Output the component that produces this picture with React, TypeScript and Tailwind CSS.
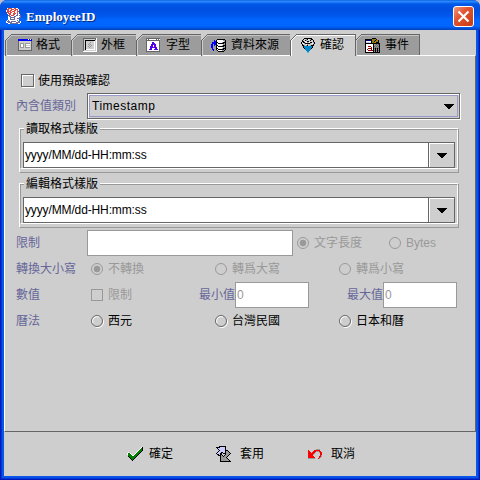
import React from "react";

const font = "font-['Liberation_Sans','Noto_Sans_CJK_TC',sans-serif]";

const palette: Record<string, string> = {
  k: "#000000", w: "#ffffff", b: "#0000ff", g: "#999999", d: "#666666", l: "#ccccff",
  r: "#ff0000", t: "#0087c8", G: "#008000", c: "#cecece", p: "#5500e8",
  m: "#990000", o: "#b87800", n: "#000080", a: "#70b8d8", e: "#e3493d", s: "#6a6a9a", y: "#35803f",
};

/** Small bitmap icon: one character per pixel, "." is transparent. */
function Bitmap({ rows }: { rows: string[] }) {
  const w = Math.max(...rows.map((r) => r.length));
  return (
    <svg width={w} height={rows.length} viewBox={`0 0 ${w} ${rows.length}`} shapeRendering="crispEdges" className="shrink-0">
      {rows.flatMap((row, y) =>
        [...row].map((c, x) => (c === "." ? null : <rect key={`${x}-${y}`} x={x} y={y} width="1" height="1" fill={palette[c]} />)),
      )}
    </svg>
  );
}

const formatIcon = [
  "bbbbbbbbbbwbwb", "bbbbbbbbbbbbbb", "dccccccccccccd", "dccccccccccccd", "dcggggcgggggcd", "dcgwwgcgwwwwcd",
  "dcgwwgcgcccccd", "dcgwwgcgwwwwcd", "dcggggcgggggcd", "dccccccccccccd", "dccccccccccccd", "dddddddddddddd",
];
const frameIcon = [
  "dddddddddddddw", "dcccccccccccdw", "dckkkkkkkkkkcw", "dckccccccccwcw", "dckccccgcccwcw", "dckcccgccccwcw", "dckccgcgcccwcw",
  "dckcccgcgccwcw", "dckccgcgcccwcw", "dckcccgccccwcw", "dckccccccccwcw", "dckwwwwwwwwwcw", "dccccccccccccw", "wwwwwwwwwwwwww",
];
const fontIcon = [
  "dddddddddddddd", "dwdwwwwwwwdwdw", "dddddddddddddd", "dwwwwwwwwwwwwd", "dwwwwwppwwwwwd", "dwwwwwpppwwwwd", "dwwwwpppppwwwd",
  "dwwwwppwppwwwd", "dwwwpppwppwwwd", "dwwwpppppppwwd", "dwwwppwwwppwwd", "dwwpppwwppppwd", "dwwwwwwwwwwwwd", "dddddddddddddd",
];
const dataIcon = [
  "......kkkkkkkk..", "...b.kwwwwwwggk.", "...bbkwwwwwwwgk.", ".bbbbkkwwwwgkkk.", ".bbbbkwkkkkkkgk.", "bb.bbkwwwwwwggk.", "bb.b.kkwwwwgkkk.",
  "bb...kwkkkkkkgk.", "bb...kwwwwwwggk.", ".b...kkwwwwgkkk.", ".bb..kwkkkkkkgk.", "..b...kwwwwggk..", ".......kkkkkk...",
];
const verifyIcon = [
  "...kkkkkkkk....", "..kccgkwcgkk...", ".kcckgccckcck..", ".kkcwckkcccck..", "kckkcwgcwkkcgk.", "kcwgkkkkkgcwck.", ".kcccwgccccck..", ".kkgcgkccgkkk..",
  "..kttttttttk...", "..kttttttttk...", "...kttttttk....", "....tttttt.....", ".....tttt......", "......tt.......", "......aa.......",
];
const eventIcon = [
  ".......kkkk.....", "kkkkkkkoyook....", "knnnnnkooykook..", "kwwwwwkyokoyok..", "klllllkoyookkk..", "kkkkkkkkkkkkkkk.", "kwwwwwwwkggdgdk.",
  "kwwwwwwwkgdgdgk.", "kwwmmmwwkdgdgdk.", "kwwwwwmwkgdgdgk.", "kwwmmmmwkdkdkdk.", "kwmwwwmwkgkgkgk.", "kwwmmmmmkdkdkdk.", "kwwwwwwwkgkgkgk.", "kkkkkkkkkkkkkkk.",
];
const checkIcon = [
  "..............wk", ".............wGk", "............wGGk", "...........wGGGk", "..........wGGGk.", ".w.......wGGGk..", "wGGw....wGGGk...",
  "wGGGw..wGGGk....", ".GGGGwwGGGk.....", ".kGGGGGGGk......", "..kGGGGGk.......", "...kGGGk........", "....kGk.........", ".....k..........",
];
const cancelIcon = [
  "........gggg..", "r.....rrrrrr..", "rr...rrrgggrr.", "rrr.rrrg...grr", "rrrrrrg.....rr", "rrrrrg......rr", "rrrrr.......rg",
  "rrrrrr.....rrg", "rrrrrrr....rg.", "ggggggg...rg..",
];
const javaIcon = [
  ".weeeewweeww...", ".eewweeeweeew..", "weeweewweewew..", "weeeeweeewwee..", ".eeweewwewwew..", ".weeewweeewew..", "..weewweewwsww.", "..ssweeewwsswss",
  "..wsswwwsswwwws", "..wwssssswwwwss", "..wwswwwswwsss.", "..wwssssswwww..", ".wswwwwwwwwsw..", "wssswssssswwssw", "wwsssswwwwssssw", "..wwssssssssww.",
];

function Tab({ label, icon, className, active = false }: { label: string; icon: string[]; className: string; active?: boolean }) {
  return (
    <div className={`relative flex shrink-0 items-center border-t border-r border-[#666] ${className} ${active ? "z-10 -mb-px h-[22px] bg-[#cecece]" : "h-[21px] bg-[#9c9c9c]"}`}>
      <svg width="7" height="22" className="absolute -left-px -top-px" shapeRendering="crispEdges">
        <path d="M0 0H7L1 6H0Z" fill="#cecece" />
        <path d="M0.5 22V6.5L6.5 0.5" stroke="#666" fill="none" />
        <path d="M1.5 22V6.5L7 1" stroke={active ? "#fff" : "#cecece"} fill="none" />
      </svg>
      <span className={`absolute left-[6px] right-0 top-0 h-px ${active ? "bg-white" : "bg-[#c4c4c4]"}`} />
      <Bitmap rows={icon} />
      <span className="pb-px">{label}</span>
    </div>
  );
}

function Arrow() {
  return (
    <svg width="10" height="5" shapeRendering="crispEdges" className="shrink-0">
      <path d="M0 0H10V1H9V2H8V3H7V4H6V5H4V4H3V3H2V2H1V1H0Z" />
    </svg>
  );
}

function PatternBox({ title }: { title: string }) {
  return (
    <fieldset className="relative mr-[16px] ml-[14px] h-[45px] border border-r-[#999] border-b-[#999] border-l-white border-t-white">
      <div className="h-full border border-r-white border-b-white border-l-[#999] border-t-[#999] px-[2px] pt-[12px]">
        <div className="flex h-[26px] border border-[#666] bg-white">
          <div className="flex grow items-center pl-px tracking-[-0.13px]">yyyy/MM/dd-HH:mm:ss</div>
          <div className="flex w-[26px] items-center justify-center border-l border-[#666] bg-[#cecece] shadow-[inset_1px_1px_0_#fff]">
            <Arrow />
          </div>
        </div>
      </div>
      <span className="absolute left-[4px] top-[-8px] bg-[#cecece] px-[2px] leading-[16px]">{title}</span>
    </fieldset>
  );
}

function Radio({ label, disabled = false, checked = false, className }: { label: string; disabled?: boolean; checked?: boolean; className: string }) {
  return (
    <label className={`flex shrink-0 items-center gap-[4px] whitespace-nowrap ${className} ${disabled ? "text-[#999]" : "text-black"}`}>
      <svg width="13" height="13" viewBox="0 0 13 13" className="shrink-0">
        {!disabled && <circle cx="7" cy="7" r="5.5" fill="none" stroke="#fff" />}
        <circle cx="6" cy="6" r="5.5" fill={disabled ? "none" : "#cecece"} stroke={disabled ? "#999" : "#666"} />
        {!disabled && <path d="M2 8A4.5 4.5 0 0 1 8 2" fill="none" stroke="#fff" />}
        {checked && <circle cx="6" cy="6" r="3.2" fill="#999" />}
      </svg>
      <span>{label}</span>
    </label>
  );
}

function FormRow({ label, children }: { label: string; children: React.ReactNode }) {
  return (
    <div className="flex h-[26px] items-center pl-[11px]">
      <span className="w-[71px] shrink-0 whitespace-nowrap text-[#666699]">{label}</span>
      {children}
    </div>
  );
}

function NumberField({ label }: { label: string }) {
  return (
    <div className="flex shrink-0 items-center">
      <span className="w-[36px] shrink-0 whitespace-nowrap text-[#666699]">{label}</span>
      <div className="flex h-[26px] w-[74px] items-center border border-[#999] bg-white pl-px text-[#999]">0</div>
    </div>
  );
}

/** Two interlocking arrows, one lavender and one gray. */
function ApplyIcon() {
  return (
    <svg width="17" height="18" viewBox="0 0 17 18" shapeRendering="crispEdges" className="shrink-0">
      <path d="M5.5 11.5L1.5 8.5L4.5 5.5L1.5 2.5H4.5V1.5H10.5V9.5L7.5 7.5L5.5 8.5Z" fill="#ccccff" stroke="#000" />
      <path d="M10.5 5.5L12.5 5.5L15.5 8.5L11.5 12.5L15.5 16.5H5.5V8.5L8.5 11.5L10.5 9.5Z" fill="#999" stroke="#000" />
    </svg>
  );
}

function Action({ icon, label, className }: { icon: React.ReactNode; label: string; className: string }) {
  return (
    <button className={`flex shrink-0 items-center ${className}`}>
      {icon}
      <span>{label}</span>
    </button>
  );
}

export default function App() {
  return (
    <div className="h-[480px] w-[480px] overflow-hidden bg-[#bdbdce]">
      <div className={`flex h-full w-full flex-col overflow-hidden rounded-t-[7px] bg-[#0831d9] text-[12px] leading-[16px] text-black ${font}`}>
        <header className="flex h-[30px] shrink-0 items-center justify-between bg-[linear-gradient(to_bottom,#0050d8_0px,#3090ff_1px,#2080fa_2px,#0058e6_4px,#0050e0_9px,#0055ea_15px,#0066ff_20px,#0066ff_26px,#0054e0_28px,#0041b8_30px)] pl-[6px] pr-[6px] pt-[2px]">
          <div className="flex items-center gap-[5px]">
            <Bitmap rows={javaIcon} />
            <span className="pt-px font-['Liberation_Serif',serif] text-[13px] font-bold text-white [text-shadow:1px_1px_0_#062a80]">EmployeeID</span>
          </div>
          <button className="flex h-[21px] w-[21px] items-center justify-center rounded-[3px] border border-white bg-[linear-gradient(135deg,#ee987f,#e2532f_40%,#c33c14)]">
            <svg width="13" height="13" viewBox="0 0 13 13">
              <path d="M1.5 1.5L11.5 11.5M11.5 1.5L1.5 11.5" stroke="#fff" strokeWidth="2.2" />
            </svg>
          </button>
        </header>
        <div className="flex grow bg-[#0019b8] px-px pb-px">
          <div className="flex grow bg-[#0035d8] px-px pb-px">
            <div className="flex grow flex-col border-x-2 border-b-2 border-[#0855e8] bg-[#cecece]">
              <nav className="flex h-[25px] shrink-0 items-start pl-[2px] pt-[4px]">
                <Tab label="格式" icon={formatIcon} className="w-[66px] gap-[4px] pl-[12px]" />
                <Tab label="外框" icon={frameIcon} className="w-[65px] gap-[4px] pl-[11px]" />
                <Tab label="字型" icon={fontIcon} className="w-[65px] gap-[6px] pl-[9px]" />
                <Tab label="資料來源" icon={dataIcon} className="w-[89px] gap-[4px] pl-[9px]" />
                <Tab label="確認" icon={verifyIcon} className="w-[65px] gap-[4px] pl-[10px]" active />
                <Tab label="事件" icon={eventIcon} className="w-[64px] gap-[4px] pl-[9px]" />
              </nav>
              <main className="flex h-[377px] shrink-0 flex-col border border-r-[#666] border-b-[#666] border-l-white border-t-white">
                <label className="mt-[17px] ml-[16px] flex h-[16px] items-center gap-[4px]">
                  <span className="mb-[2px] h-[13px] w-[13px] border border-[#666] shadow-[1px_1px_0_#fff,inset_1px_1px_0_#fff]" />
                  <span>使用預設確認</span>
                </label>
                <div className="mt-[4px] flex h-[26px] items-center pl-[11px]">
                  <span className="w-[71px] shrink-0 text-[#666699]">內含值類別</span>
                  <div className="flex h-[26px] w-[373px] border border-[#666] p-px shadow-[1px_1px_0_#fff,inset_1px_1px_0_#fff]">
                    <div className="flex grow items-center justify-between border border-[#9999cc] pl-[2px] pr-[3px]">
                      <span className="tracking-[0.5px]">Timestamp</span>
                      <Arrow />
                    </div>
                  </div>
                </div>
                <div className="mt-[9px] flex flex-col gap-[10px]">
                  <PatternBox title="讀取格式樣版" />
                  <PatternBox title="編輯格式樣版" />
                </div>
                <div className="mt-[2px] flex flex-col">
                  <FormRow label="限制">
                    <div className="h-[26px] w-[206px] shrink-0 border border-[#999] bg-white" />
                    <Radio label="文字長度" disabled checked className="ml-[4px] w-[92px]" />
                    <Radio label="Bytes" disabled className="" />
                  </FormRow>
                  <FormRow label="轉換大小寫">
                    <Radio label="不轉換" disabled checked className="ml-[4px] w-[124px]" />
                    <Radio label="轉爲大寫" disabled className="w-[124px]" />
                    <Radio label="轉爲小寫" disabled className="" />
                  </FormRow>
                  <FormRow label="數值">
                    <label className="ml-[4px] flex w-[108px] shrink-0 items-center gap-[5px] text-[#999]">
                      <span className="h-[12px] w-[12px] border border-[#999]" />
                      <span>限制</span>
                    </label>
                    <NumberField label="最小值" />
                    <div className="w-[38px] shrink-0" />
                    <NumberField label="最大值" />
                  </FormRow>
                  <FormRow label="曆法">
                    <Radio label="西元" className="ml-[4px] w-[124px]" />
                    <Radio label="台灣民國" className="w-[124px]" />
                    <Radio label="日本和曆" className="" />
                  </FormRow>
                </div>
              </main>
              <footer className="flex grow items-center pl-[123px]">
                <Action icon={<Bitmap rows={checkIcon} />} label="確定" className="w-[88px] gap-[6px]" />
                <Action icon={<ApplyIcon />} label="套用" className="w-[93px] gap-[8px]" />
                <Action icon={<Bitmap rows={cancelIcon} />} label="取消" className="gap-[9px]" />
              </footer>
            </div>
          </div>
        </div>
      </div>
    </div>
  );
}
